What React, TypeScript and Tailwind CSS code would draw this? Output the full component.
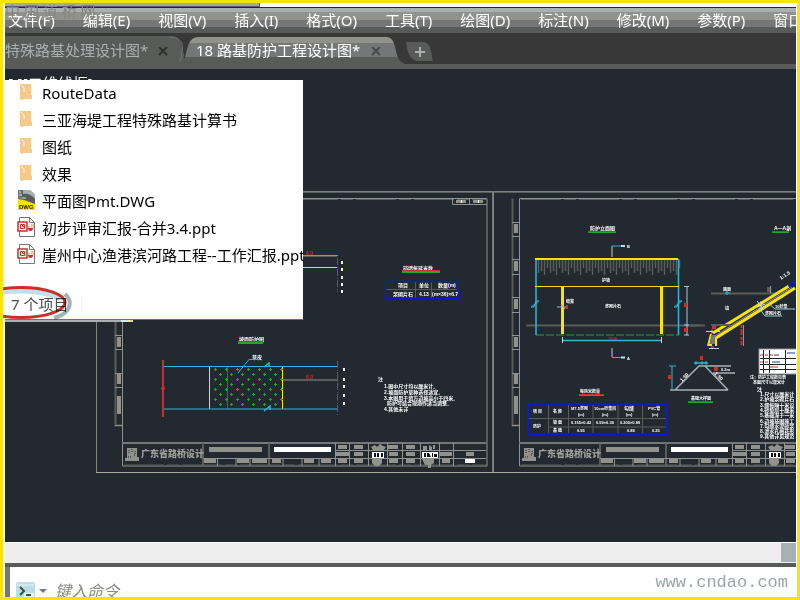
import React from 'react';

const menuItems = [
  '文件(F)', '编辑(E)', '视图(V)', '插入(I)', '格式(O)', '工具(T)',
  '绘图(D)', '标注(N)', '修改(M)', '参数(P)', '窗口(W)',
];

type FileKind = 'folder' | 'dwg' | 'ppt';

const files: { name: string; kind: FileKind }[] = [
  { name: 'RouteData', kind: 'folder' },
  { name: '三亚海堤工程特殊路基计算书', kind: 'folder' },
  { name: '图纸', kind: 'folder' },
  { name: '效果', kind: 'folder' },
  { name: '平面图Pmt.DWG', kind: 'dwg' },
  { name: '初步评审汇报-合并3.4.ppt', kind: 'ppt' },
  { name: '崖州中心渔港滨河路工程--工作汇报.ppt', kind: 'ppt' },
];

const YELLOW = '#f8e30c';
const CYAN = '#38b4d2';
const RED = '#c8302c';
const GREEN = '#22a52c';
const GREY = '#92928d';
const DIM = '#5c5d59';
const BLUE = '#0a1cc8';

const FileIcon: React.FC<{ kind: FileKind }> = ({ kind }) => {
  if (kind === 'folder') {
    return (
      <svg width="20" height="20" viewBox="0 0 20 20" aria-hidden="true">
        <path d="M3 2h11v11h1v4H6v1H4v-1H3z" fill="#f4c98a" />
        <path d="M4 3l3 3v4" stroke="#fff" strokeWidth="1" fill="none" />
      </svg>
    );
  }
  if (kind === 'dwg') {
    return (
      <svg width="20" height="20" viewBox="0 0 20 20" aria-hidden="true">
        <path d="M1 0h12l5 5v15H1z" fill="#585b58" />
        <path d="M6 0h7l5 5v4C15 5 11 3 6 4z" fill="#a7b0b2" />
        <path d="M1 9l6 1 11 4v6H1z" fill={YELLOW} />
        <path d="M1 0h4v9H1z" fill="#747678" />
        <path d="M2 2h2M2 5h3M5 8h4" stroke="#bddde6" />
        <text x="2" y="19" fontSize="6" fontWeight="900" fontFamily="Liberation Sans" fill="#222">DWG</text>
      </svg>
    );
  }
  return (
    <svg width="20" height="20" viewBox="0 0 20 20" aria-hidden="true">
      <path d="M2.500 .5h10l5 5v14h-15z" fill="#fff" stroke="#747678" />
      <path d="M12.500 .5V5.500h5" fill="none" stroke="#747678" />
      <path d="M11 11h5c0 2-1 3-2.500 3S11 13 11 11z" fill={RED} />
      <path d="M14 7h3v4h-3zM11 9h2v2h-2z" fill="#f4c98a" />
      <rect x="1" y="5" width="9" height="9" fill="#fff" stroke={RED} strokeWidth="1.500" />
      <path d="M3.500 7.500h4v4h-4zM5.500 7.500v2h2" fill="none" stroke={RED} />
    </svg>
  );
};

const Note: React.FC<{ x: number; y: number; size?: number; fill?: string; rotate?: number; children: React.ReactNode }> = ({
  x, y, size = 5, fill = '#fff', rotate = 0, children,
}) => (
  <text
    x={x}
    y={y}
    fontSize={size}
    fill={fill}
    fontWeight="700"
    transform={rotate ? `rotate(${rotate} ${x} ${y})` : undefined}
  >
    {children}
  </text>
);

const Underline: React.FC<{ x1: number; x2: number; y: number; thick?: number }> = ({ x1, x2, y, thick = 1 }) => (
  <>
    <path d={`M${x1} ${y + 0.5}H${x2}`} stroke={RED} />
    <rect x={x1} y={y + 1} width={x2 - x1} height={thick} fill={GREEN} />
  </>
);

// Border, binding strip and title block shared by both drawing sheets
const SheetFrame: React.FC = () => {
  const stripLines = [222, 236, 259, 274, 297, 312, 335, 349, 373, 387, 425];
  const stripFills = [[224, 9], [261, 10], [299, 10], [337, 10], [374, 10], [396, 18]];
  const columns = [335, 349, 368, 387, 402, 420, 439, 453];
  const cells = [
    [338, 445, 9], [354, 445, 9], [388, 445, 10], [406, 445, 9],
    [336, 452, 13], [354, 452, 9], [389, 452, 9], [406, 452, 9], [440, 452, 12], [466, 452, 8],
    [338, 459, 9], [354, 459, 9], [389, 459, 9], [406, 459, 9], [442, 459, 8],
    [204, 459, 12], [237, 459, 12], [252, 459, 15], [272, 459, 9], [304, 459, 10], [321, 459, 10],
  ];
  return (
    <g fill="none">
      <path d="M96.500 472.500V191.500H493" stroke="#80827f" />
      <path d="M96 472.500H493" stroke="#b0a9a0" />
      <path d="M97 192.500H493" stroke={DIM} />
      <path d="M493 192V472" stroke="#747678" strokeWidth="2" />
      <path d="M122.500 198.500H487V466H122.500z" stroke={GREY} />
      <path d="M124 199.500H486M124 465H486" stroke={DIM} strokeDasharray="40 3 12 3" />
      <path d="M115.500 198.500V425.500H122" stroke={DIM} strokeWidth="2" />
      <path d="M486 443H122" stroke="#747678" strokeWidth="2" />
      <path d="M203 443V466M269 443V466" stroke={DIM} strokeWidth="2" />
      <path d="M203 458.500H486M335 450.500H486M217.500 458V466M236 458V466M250 458V466M283 458V466M302 458V466M319 458V466" stroke={GREY} />
      {stripLines.map((y) => (
        <path key={y} d={`M115 ${y + 0.5}H122`} stroke={GREY} />
      ))}
      {stripFills.map(([y, h]) => (
        <rect key={y} x="117" y={y} width="4" height={h} fill={GREY} />
      ))}
      {columns.map((x) => (
        <path key={x} d={`M${x + 0.5} 443V466`} stroke={GREY} />
      ))}
      {cells.map(([x, y, w]) => (
        <rect key={`${x}-${y}`} x={x} y={y} width={w} height="4" fill={GREY} />
      ))}
      <path d="M452.500 198V204.500H487M469.500 199V204" stroke={GREY} />
      <path d="M456 201.500H466M473 201.500H483" stroke={GREY} strokeWidth="3" />
      <path d="M461.500 200V203M478.500 200V203" stroke="#fff" />
      <path d="M127 448h10v9h2v4h-14v-3h2z" fill={GREY} />
      <path d="M129 450v3m3-4v4m3-2v3M128 457h3m3-2h2" stroke="#222931" strokeDasharray="1 1" />
      <text x="141" y="457" fontSize="9" fontWeight="900" fill="#a0a09a">广东省路桥设计</text>
      <rect x="209" y="447" width="53" height="5" fill={GREY} />
      <rect x="274" y="447" width="57" height="5" fill="#fff" />
      <rect x="465" y="459" width="10" height="4" fill="#fff" />
      <path d="M371 447l4-2 2 2 3-3 3 2 3 1-2 3h-4l-3 1-4-1zM372 459h10v4l-3 3h-4l-3-3z" fill={GREY} />
      <path d="M372 452h12v6h-12z" fill="#fff" />
      <path d="M374 453h2v4h-2zM377 453h2v4h-2zM381 453h2v4h-2z" fill="#111" />
      <path d="M423 446h4v4h-4zM429 445l3 2v4h-3zM433 445h2v4h-2zM422 459h12v4l-3 2v3h-3v-3h-3z" fill={GREY} />
      <path d="M422 452h16v6h-16z" fill="#fff" />
      <path d="M424 453h2v4h-2zM427 453h2l2 4h-4zM432 453h1v4h-1zM434 454h3v3h-3z" fill="#111" />
    </g>
  );
};

const LeftSheet: React.FC = () => {
  const plants: number[][] = [];
  for (let row = 0; row < 8; row++) {
    for (let x = 214 + (row % 2) * 5; x < 281; x += 11) {
      plants.push([x, 369 + row * 5]);
    }
  }
  return (
    <g fill="none">
      <path d="M303 255.500H338" stroke={CYAN} />
      <path d="M303 256.500H337" stroke={DIM} />
      <path d="M303 267.500H337" stroke={YELLOW} />
      <path d="M337.500 258V292" stroke={RED} strokeDasharray="7 2 1 1" />
      <Note x={306} y={255} fill={RED}>8.0</Note>
      {[261, 268, 276, 283, 290].map((y) => (
        <rect key={y} x="341" y={y} width="2" height="3" fill="#fff" />
      ))}
      <Note x={403} y={270}>挡墙每延米数</Note>
      <Underline x1={402} x2={440} y={270} thick={2} />
      <path d="M386 289.500H457M415.500 281V299M431.500 281V299" stroke={DIM} />
      <path d="M385.500 281.500H457.500V290.500H458.500V298.500H385.500z" stroke={BLUE} strokeWidth="1.500" />
      <Note x={398} y={287}>项目</Note>
      <Note x={419} y={287}>单位</Note>
      <Note x={438} y={287}>数量(m)</Note>
      <Note x={393} y={296}>浆砌片石</Note>
      <Note x={419} y={296}>4.13</Note>
      <Note x={432} y={296}>(m×36)×6.7</Note>

      <Note x={239} y={341}>坡面防护图</Note>
      <Underline x1={238} x2={263} y={341} thick={2} />
      <path d="M209.500 367V409M282.500 367V409" stroke={YELLOW} />
      <path d="M227.500 367V409" stroke={DIM} />
      {plants.map(([x, y]) => (
        <path key={`${x}-${y}`} d={`M${x} ${y + 0.5}h3M${x + 1.5} ${y - 1}v3`} stroke={GREEN} strokeWidth="1" />
      ))}
      <Note x={252} y={359}>草皮</Note>
      <path d="M164 366.500H338M164 409H338M260 359.500H249L238 373" stroke={CYAN} />
      <path d="M264 367l5-4v4M264 411l6-5v4" stroke={CYAN} strokeWidth="1.500" />
      <path d="M163 360V417" stroke={RED} strokeWidth="2" />
      <path d="M161 388.500h4" stroke={RED} strokeWidth="2" />
      <path d="M283 380H338" stroke={GREY} />
      <Note x={306} y={379} fill={RED}>8.0</Note>
      <path d="M337.500 361V415" stroke={RED} strokeDasharray="7 2 1 1" />
      {[368, 378, 385, 394, 402].map((y) => (
        <rect key={y} x="343" y={y} width="2" height="3" fill="#fff" />
      ))}
      <Note x={378} y={381}>注</Note>
      <Note x={384} y={388}>1.图中尺寸均以厘米计。</Note>
      <Note x={384} y={394}>2.坡面防护草种选择适宜。</Note>
      <Note x={384} y={400}>3.本图用于填方边坡高小于四米。</Note>
      <Note x={387} y={405}>防护可结合现场作适当调整。</Note>
      <Note x={384} y={411}>4.其他未详</Note>
    </g>
  );
};

const QuantityTable: React.FC = () => (
  <g fill="none">
    <Note x={580} y={393} size={4}>每延米数量</Note>
    <Underline x1={579} x2={604} y={394} />
    <path d="M548.500 404V434M568.500 404V434M593 404V434M618 404V434M642.500 404V434M529 418.500H667M548 427H667" stroke={DIM} />
    <rect x="528" y="404" width="139" height="30" stroke={BLUE} strokeWidth="2" />
    <Note x={533} y={413} size={4}>项 目</Note>
    <Note x={553} y={413} size={4}>名 称</Note>
    <Note x={571} y={410} size={4}>M7.5浆砌</Note>
    <Note x={578} y={416} size={4}>(m)</Note>
    <Note x={594} y={410} size={4}>10cm砂垫层</Note>
    <Note x={602} y={416} size={4}>(m)</Note>
    <Note x={624} y={410}>勾缝</Note>
    <Note x={626} y={416} size={4}>(m)</Note>
    <Note x={648} y={410} size={4}>PVC管</Note>
    <Note x={652} y={416} size={4}>(m)</Note>
    <Note x={533} y={428} size={4}>防护</Note>
    <Note x={553} y={424} size={4}>坡 面</Note>
    <Note x={571} y={424} size={4}>0.155×0.42</Note>
    <Note x={596} y={424} size={4}>0.59×0.30</Note>
    <Note x={620} y={424} size={4}>0.200×0.89</Note>
    <Note x={553} y={432} size={4}>基 础</Note>
    <Note x={577} y={432} size={4}>0.95</Note>
    <Note x={627} y={432} size={4}>0.88</Note>
    <Note x={652} y={432} size={4}>0.25</Note>
  </g>
);

const RightSheet: React.FC = () => (
  <g fill="none">
    <Note x={590} y={230}>防护立面图</Note>
    <Underline x1={588} x2={616} y={231} />
    <path d="M612 257V246M612 348V357" stroke={GREY} strokeWidth="1.500" />
    <path d="M612 246H624M612 357.500H624" stroke={CYAN} />
    <path d="M621 246h4M621 357.500h4" stroke="#bddde6" strokeWidth="2" />
    <Note x={627} y={248} size={4}>B</Note>
    <Note x={627} y={360} size={4}>A</Note>
    {Array.from({ length: 24 }, (_, i) => (
      <path
        key={i}
        d={`M${538.5 + i * 6} 260V${i % 2 ? 275 : 273}M${541.5 + i * 6} 260V${i % 2 ? 268 : 271}`}
        stroke={DIM}
        strokeWidth="1.500"
      />
    ))}
    <path d="M526 325.500H700" stroke={DIM} strokeWidth="2" />
    <path d="M536 335H679" stroke={GREEN} strokeDasharray="8 2" />
    <path d="M536 259V335M678.500 259V335M562 340.500H662" stroke={CYAN} strokeWidth="1.500" />
    <path d="M531 307h3l2-6h3l-8 6M674 307h3l2-6h3l-8 6" stroke={CYAN} />
    <path d="M562.500 287V334M661.500 287V334" stroke={YELLOW} strokeWidth="3" />
    <path d="M535 259H678" stroke={YELLOW} strokeWidth="2" />
    <path d="M535 286.500H679" stroke={YELLOW} />
    <path d="M562.500 337V343M661.500 337V343" stroke="#bddde6" />
    <Note x={602} y={282} size={4}>护坡</Note>
    <Note x={605} y={308} size={4}>浆砌片石</Note>
    <Note x={566} y={303} size={4}>缝宽</Note>
    <path d="M557 307h9m-5-3l4 5" stroke="#a7b0b2" />
    <rect x="566" y="305" width="2" height="4" fill={RED} />
    <Note x={608} y={340} size={4} fill={RED}>1000</Note>
    <path d="M687 287V335M684 286.500h5M684 325h5M684 335h5" stroke="#9accd8" />
    <path d="M684 303h3v4h-3zM684 328h3v4h-3z" fill={RED} />

    <Note x={774} y={230}>A—A剖</Note>
    <Underline x1={772} x2={789} y={231} />
    <Note x={781} y={280} rotate={-34}>1:1.5</Note>
    <path d="M711 293.500H778" stroke={DIM} strokeWidth="2" />
    <Note x={723} y={291} size={4}>路面</Note>
    <Note x={725} y={310} size={4}>填</Note>
    <path d="M725 293h5m-3-2v4M694 363h14m-12-2v4m10-4v4" stroke={CYAN} />
    <path d="M716 338L795 288M713 333L789 286" stroke={YELLOW} strokeWidth="3" />
    <path d="M715 336L792 287" stroke={GREY} />
    <path d="M789 287l7-6" stroke={BLUE} strokeWidth="3" />
    <path d="M708 346l3-12M716 346v-9M708 345h4" stroke={YELLOW} strokeWidth="2" />
    <path d="M711 335h4v9h-5z" fill="#747678" />
    <path d="M706 331.500h14m-11 17h10m-7-19v4" stroke="#bddde6" />
    <path d="M712 326h4v3h-4zM711 346h3v2h-3zM767 287h3v5h-3zM700 356h3v4h-3z" fill={RED} />
    <path d="M711 325H730M690 325.500H705" stroke={DIM} strokeWidth="2" />
    <path d="M770.500 286V293M743.500 325V346" stroke={CYAN} />
    <path d="M741.500 325V345" stroke={RED} strokeWidth="2" strokeDasharray="3 1 6 2" />
    <path d="M757 301l7 9m-7-3l8-3m-4-3v9" stroke="#bddde6" />
    <path d="M759 308l6 8H782M768 303l7 6H795" stroke="#9accd8" />
    <Note x={765} y={315} size={4}>浆砌片石</Note>
    <Note x={775} y={308} size={4}>10砂垫</Note>

    <path d="M670 390H728M675 390L699 366H731M705 366L728 390M713 373H735" stroke="#a7b0b2" strokeWidth="1.500" />
    <path d="M672 366V390M669 366h7M694 363h14M702 361v4" stroke={CYAN} />
    <path d="M668 375h4v4h-4zM714 367h4v4h-4z" fill={RED} />
    <Note x={682} y={382} rotate={-45}>1:50</Note>
    <Note x={714} y={374} rotate={45}>1:50</Note>
    <Note x={721} y={371} size={4}>0.2m</Note>
    <Note x={691} y={400} size={4}>基础大样图</Note>
    <Underline x1={688} x2={713} y={401} />

    <rect x="759" y="349" width="40" height="25" fill="#fff" stroke={GREY} />
    <path d="M763.500 350V373M769.500 350V373M785.500 350V373M760 358.500H797M760 364.500H797M760 369.500H797" stroke="#222" />
    <path d="M760 355h3m2 0h3m2 0h3M760 362h3m2 0h3m2 5h8" stroke={RED} />
    <path d="M774 355h5m8-2h8M772 362h8" stroke="#223a88" />
    <Note x={750} y={379} size={4}>注：防护工程数见表</Note>
    <Note x={753} y={384} size={4}>本图尺寸以厘米计</Note>
    <Note x={757} y={391}>注</Note>
    {[
      '1.尺寸以厘米计', '2.护坡浆砌片石', '3.缝每隔十米设',
      '4.砂垫层十厘米', '5.基础深于一米', '6.边坡按图施工',
      '7.勾缝水泥砂浆', '8.泄水孔梅花形', '9.其他详见规范',
    ].map((line, i) => (
      <Note key={line} x={760} y={396 + i * 5.3}>{line}</Note>
    ))}
    <QuantityTable />
  </g>
);

const Drawing: React.FC = () => (
  <svg
    className="block w-full font-['Liberation_Sans','Noto_Sans_CJK_SC',sans-serif]"
    viewBox="5 69 791 473"
    role="img"
    aria-label="路基防护工程设计图"
  >
    <SheetFrame />
    <g transform="translate(397 0)">
      <SheetFrame />
    </g>
    <LeftSheet />
    <RightSheet />
    <path d="M5 320.500H122" stroke="#a7b0b2" strokeWidth="3" />
    <path d="M121 320.500H133" stroke="#d5e9ee" strokeWidth="3" />
    <path d="M130 320.500H132" stroke={YELLOW} strokeWidth="3" />
  </svg>
);

const MenuBar: React.FC = () => (
  <nav className="flex h-[26px] gap-7 overflow-hidden border-t border-[#222931] bg-[linear-gradient(#a7b0b2_0_4px,#92928d_4px_12px,#747678_12px_19px,#585b58_19px)] pl-[3px]">
    {menuItems.map((item) => (
      <button key={item} className="shrink-0 pb-px text-[15px] leading-6 whitespace-nowrap text-white">
        {item}
      </button>
    ))}
  </nav>
);

const TabBar: React.FC = () => (
  <div className="flex h-9 items-start overflow-hidden border-b-[5px] border-[#585b58] bg-[#383838] pt-[3px]">
    <div className="relative flex h-8 w-[179px] shrink-0 items-center text-[#a7b0b2]">
      <svg className="absolute inset-0" width="179" height="32" aria-hidden="true">
        <path d="M0 0H166C176 0 176 10 179 18V32H0z" fill="#585b58" />
        <path d="M164 1C178 1 178 10 177 15S177 24 174 26" fill="none" stroke="#747678" />
      </svg>
      <button className="relative pb-1 text-[15px] leading-6 whitespace-nowrap">特殊路基处理设计图*</button>
      <button aria-label="关闭" className="absolute left-[153px] top-[11px]">
        <svg width="10" height="9"><path d="M1 0l8 8M9 0L1 8" stroke="#2e302f" strokeWidth="2" /></svg>
      </button>
    </div>
    <div className="relative flex h-8 w-[222px] shrink-0 items-center text-white">
      <svg className="absolute inset-0" width="222" height="32" aria-hidden="true">
        <defs>
          <linearGradient id="tab" x2="0" y2="1">
            <stop offset="0.2" stopColor="#92928d" />
            <stop offset="0.2" stopColor="#747678" />
            <stop offset="0.65" stopColor="#747678" />
            <stop offset="0.65" stopColor="#585b58" />
          </linearGradient>
        </defs>
        <path d="M0 24C4 14 3 1 15 1H202C213 1 210 17 216 25L222 29V32H0z" fill="url(#tab)" />
      </svg>
      <button className="relative pb-1 pl-3 text-[15px] leading-6 whitespace-nowrap">18 路基防护工程设计图*</button>
      <button aria-label="关闭" className="absolute left-[187px] top-[11px]">
        <svg width="10" height="9"><path d="M1 0l8 8M9 0L1 8" stroke="#484a49" strokeWidth="2" /></svg>
      </button>
    </div>
    <button aria-label="新建" className="mt-[6px]">
      <svg width="28" height="19">
        <path d="M0 0H18C26 2 25 12 27 19H11C3 17 1 9 0 0z" fill="#585b58" />
        <path d="M9 10h10M14 5v10" stroke="#a7b0b2" strokeWidth="2" />
      </svg>
    </button>
  </div>
);

const FilePanel: React.FC = () => (
  <section className="absolute left-0 top-[11px] flex h-60 w-[298px] flex-col overflow-hidden border-b border-[#22a52c] bg-white">
    <ul className="flex flex-col">
      {files.map((file) => (
        <li key={file.name} className="flex h-[27px] items-center gap-[5px] pl-3">
          <span className="shrink-0 pb-1">
            <FileIcon kind={file.kind} />
          </span>
          <a href="#" className="pb-0.5 text-[15px] leading-6 whitespace-nowrap text-black">{file.name}</a>
        </li>
      ))}
    </ul>
    <div className="mt-[23px] flex h-6 items-center pl-1.5 text-[15px] leading-6 text-[#4a4c4e]">
      <span className="w-[70px]">7 个项目</span>
      <span className="h-3 w-px bg-[#ececec]" />
    </div>
  </section>
);

const App: React.FC = () => {
  return (
    <div className="relative flex h-screen flex-col overflow-hidden border-[3px] border-[#f8e30c] bg-white pl-0.5 pr-px font-['Noto_Sans','Noto_Sans_CJK_SC',sans-serif]">
      <div className="h-1 w-[255px] shrink-0 border-r border-b border-[#585b58] bg-[#a7a7a4]" />
      <header className="shrink-0">
        <MenuBar />
        <TabBar />
      </header>

      <main className="relative shrink-0 bg-[#222931]">
        <Drawing />
        <span className="absolute left-[3px] top-1 text-[15px] leading-5 text-white">[-][二维线框]</span>
        <FilePanel />
        {/* red marker ring around the item count */}
        <svg className="absolute -left-[5px] top-[211px] mix-blend-multiply" width="80" height="46" viewBox="0 280 80 46" aria-hidden="true">
          <path d="M65 294C74 302 70 314 54 318" fill="none" stroke="#9fb3b8" strokeWidth="4" />
          <ellipse cx="20" cy="303" rx="42" ry="12" fill="none" stroke="#c4dfe7" strokeWidth="5" strokeDasharray="90 200" strokeDashoffset="-88" />
          <ellipse cx="21" cy="302.500" rx="44" ry="15" fill="none" stroke="#c8302c" strokeWidth="3" />
        </svg>
      </main>

      <div className="flex h-[25px] shrink-0 justify-end border-t border-b-4 border-t-white border-b-[#585b58] bg-[#eeeeee]">
        <button aria-label="水平滚动条" className="mb-px w-[15px] bg-[#a7b0b2]" />
      </div>

      <footer className="flex min-h-0 flex-1 items-start overflow-hidden border-l-[5px] border-[#747678] bg-white">
        <div className="flex flex-1 items-start pt-3 pl-1.5">
          <button aria-label="命令选项" className="flex items-center gap-1 pt-[3px]">
            <svg width="19" height="20">
              <rect width="19" height="20" rx="2" fill="#bddde6" />
              <path d="M1 3h17" stroke="#e8f3f6" />
              <path d="M8 11h10v4H8z" fill="#eee" />
              <path d="M4 5l4 4-4 4M10 13h5" fill="none" stroke="#484a49" strokeWidth="2" />
            </svg>
            <svg width="8" height="7"><path d="M0 0h8L4 4z" fill="#747678" /></svg>
          </button>
          <input
            aria-label="键入命令"
            placeholder="键入命令"
            className="ml-2 w-full bg-transparent text-[16px] leading-6 italic outline-none placeholder:text-[#8a8a86]"
          />
        </div>
        <span className="pt-1 pr-2 font-['Liberation_Mono',monospace] text-[17px] leading-6 text-[#9aa5a8]">www.cndao.com</span>
      </footer>

      <span className="absolute left-0.5 -top-1 text-[15px] leading-6 whitespace-nowrap text-[#858682]">中 国 道 桥 网</span>
    </div>
  );
};

export default App;
